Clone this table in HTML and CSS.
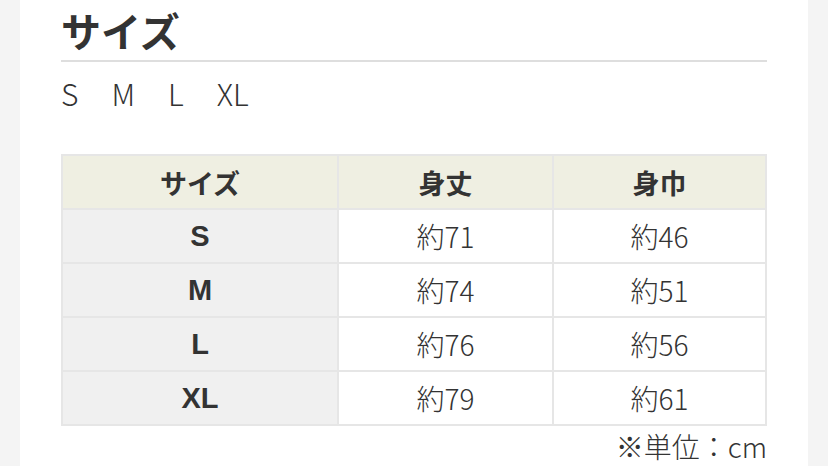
FILE: index.html
```html
<!DOCTYPE html>
<html lang="ja">
<head>
<meta charset="utf-8">
<link rel="stylesheet" href="styles.css">
</head>
<body>
<div class="page">
  <div class="content">
    <h2 class="title">サイズ</h2>
    <div class="sizes"><span>S</span><span>M</span><span>L</span><span>XL</span></div>
    <table class="size-table">
      <thead>
        <tr><th>サイズ</th><th>身丈</th><th>身巾</th></tr>
      </thead>
      <tbody>
        <tr><th>S</th><td>約71</td><td>約46</td></tr>
        <tr><th>M</th><td>約74</td><td>約51</td></tr>
        <tr><th>L</th><td>約76</td><td>約56</td></tr>
        <tr><th>XL</th><td>約79</td><td>約61</td></tr>
      </tbody>
    </table>
    <p class="unit">※単位：cm</p>
  </div>
</div>
</body>
</html>
```
FILE: styles.css
```css
html, body {
  margin: 0;
  padding: 0;
  background: #f4f4f4;
}
body {
  font-family: "Noto Sans CJK JP", sans-serif;
  color: #333;
}
.page {
  margin: 0 20px;
  background: #fff;
  height: 466px;
  overflow: hidden;
}
.content {
  padding: 0 41px;
}
.title {
  margin: 0;
  padding-top: 4px;
  font-size: 40px;
  font-weight: 700;
  line-height: 52px;
  height: 56px;
  border-bottom: 2px solid #dedede;
  color: #333;
}
.sizes {
  display: flex;
  gap: 33px;
  font-size: 30px;
  font-weight: 300;
  line-height: 34px;
  margin-top: 14px;
  color: #333;
}
.size-table {
  width: 100%;
  border-collapse: collapse;
  margin-top: 44px;
  table-layout: fixed;
}
.size-table th,
.size-table td {
  border: 2px solid #e6e6e6;
  height: 52px;
  padding: 0;
  text-align: center;
  vertical-align: middle;
}
.size-table th:first-child { width: 274px; }
.size-table thead th {
  background: #efefe2;
  font-weight: 700;
  font-size: 27px;
}
.size-table thead th:nth-child(2) { width: 213px; }
.size-table tbody th {
  background: #f0f0f0;
  font-family: "Liberation Sans", sans-serif;
  font-weight: 700;
  font-size: 29px;
  line-height: 36px;
}
.size-table td {
  background: #fff;
  font-weight: 300;
  font-size: 28px;
}
.unit {
  margin: 0;
  text-align: right;
  font-weight: 300;
  font-size: 28px;
  line-height: 40px;
}
```
